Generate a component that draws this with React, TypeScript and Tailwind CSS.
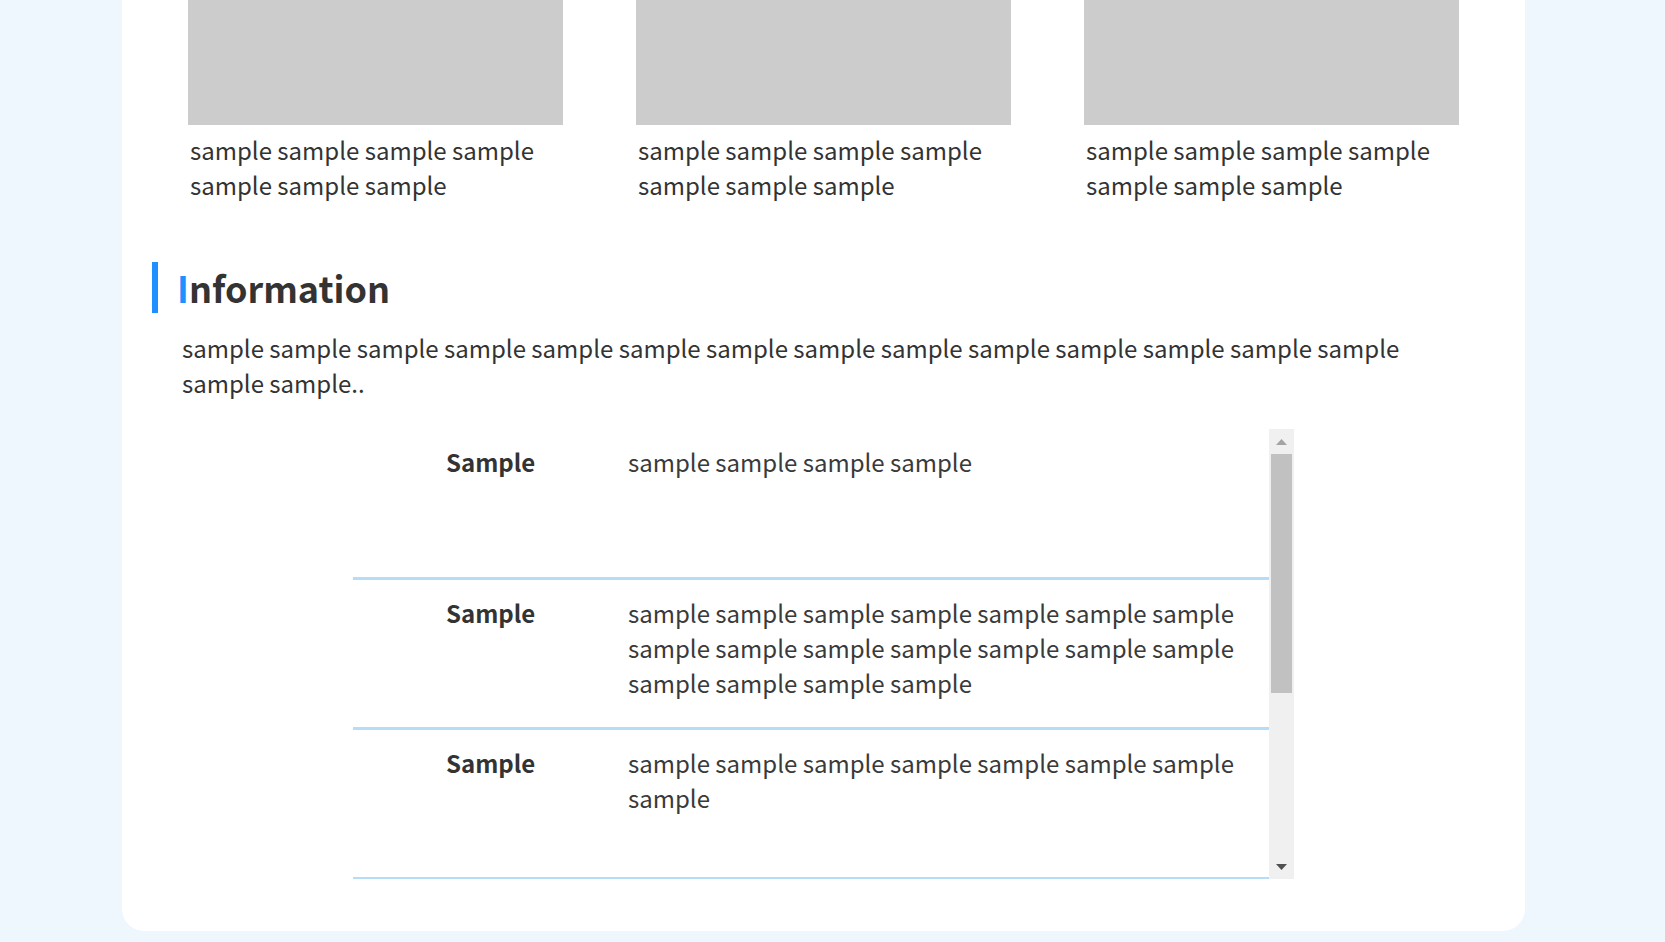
import React from "react";

const caption = "sample sample sample sample sample sample sample";

function Row({ text, h }: { text: string; h: string }) {
  return (
    <div className={"flex box-border border-b-[3px] border-[#b5dcf8] pt-[15px] " + h}>
      <div className="w-[182px] ml-[93px] shrink-0 font-bold text-[24px] leading-[35px]">Sample</div>
      <div className="flex-1 pr-[20px] text-[24px] leading-[35px] text-[#3a3a3a]">{text}</div>
    </div>
  );
}

export default function App() {
  return (
    <div
      className="min-h-screen bg-[#eef6fe] text-[#333] overflow-hidden"
      style={{ fontFamily: "'Noto Sans CJK JP', 'Noto Sans', sans-serif" }}
    >
      <div className="ml-[122px] w-[1403px] h-[931px] bg-white rounded-b-[22px] px-[30px] box-border">
        <div className="flex justify-center gap-[73px]">
          {[0, 1, 2].map((i) => (
            <div key={i} className="w-[375px]">
              <div className="h-[125px] bg-[#cccccc]" />
              <p className="mt-[7px] pl-[2px] text-[24px] leading-[35px]">{caption}</p>
            </div>
          ))}
        </div>
        <div className="mt-[60px] flex items-center">
          <div className="w-[6px] h-[51px] bg-[#1e90ff]" />
          <h2 className="ml-[19px] text-[36px] font-bold leading-[51px]">
            <span className="text-[#1e90ff]">I</span>nformation
          </h2>
        </div>
        <p className="mt-[17px] ml-[30px] mr-[70px] text-[24px] leading-[35px]">
          sample sample sample sample sample sample sample sample sample sample sample sample sample sample sample sample..
        </p>
        <div className="mt-[29px] mx-auto w-[941px] h-[450px] flex">
          <div className="flex-1 h-[450px] overflow-hidden">
            <Row h="h-[151px]" text="sample sample sample sample" />
            <Row h="h-[150px]" text="sample sample sample sample sample sample sample sample sample sample sample sample sample sample sample sample sample sample" />
            <Row h="h-[150px]" text="sample sample sample sample sample sample sample sample" />
          </div>
          <div className="w-[25px] h-[450px] bg-[#f0f0f0] flex flex-col">
            <div className="h-[25px] flex items-center justify-center">
              <svg width="11" height="6" viewBox="0 0 11 6"><path d="M5.5 0 L11 6 L0 6 Z" fill="#a3a3a3" /></svg>
            </div>
            <div className="mx-[2px] h-[239px] bg-[#c1c1c1]" />
            <div className="flex-1" />
            <div className="h-[25px] flex items-center justify-center">
              <svg width="11" height="6" viewBox="0 0 11 6"><path d="M0 0 L11 0 L5.5 6 Z" fill="#505050" /></svg>
            </div>
          </div>
        </div>
      </div>
    </div>
  );
}
